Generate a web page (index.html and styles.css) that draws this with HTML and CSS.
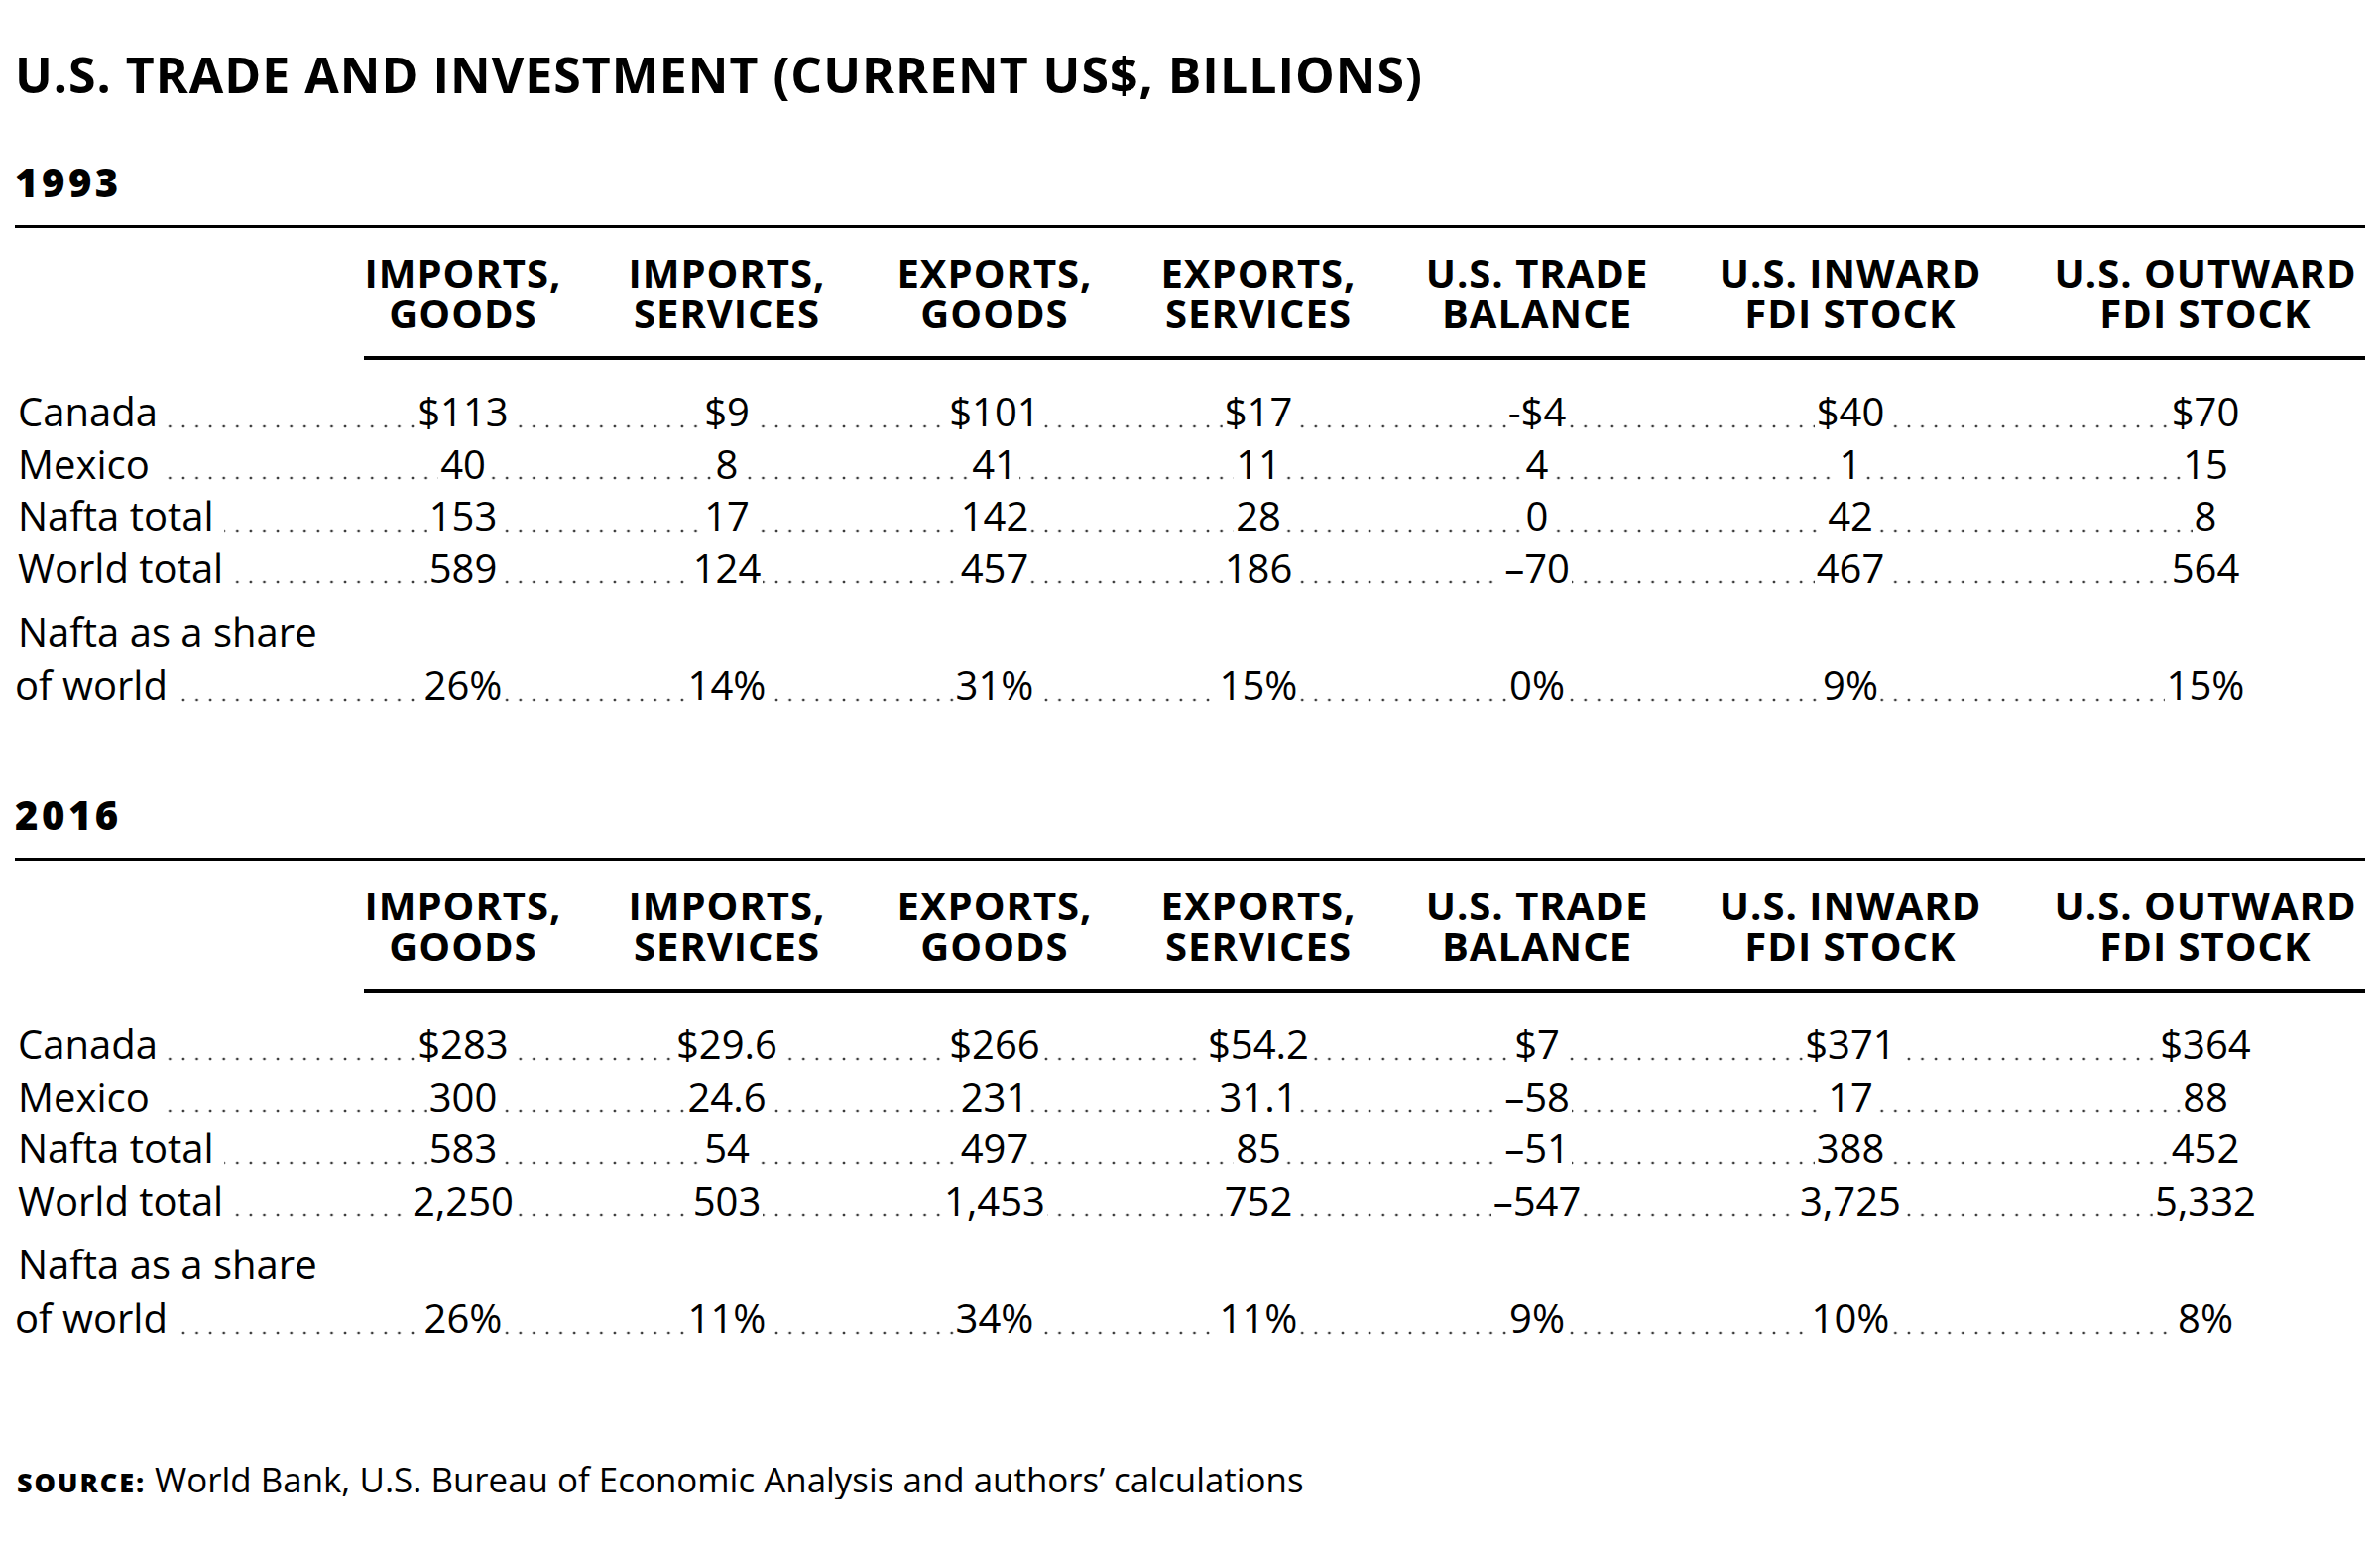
FILE: index.html
```html
<!DOCTYPE html>
<html lang="en">
<head>
<meta charset="utf-8">
<title>U.S. Trade and Investment</title>
<link rel="stylesheet" href="styles.css">
</head>
<body>
<main class="page">
  <h1 class="title">U.S. TRADE AND INVESTMENT (CURRENT US$, BILLIONS)</h1>

  <section class="block">
    <h2 class="year">1993</h2>
    <div class="grid head">
      <div class="hcell blank"></div>
      <div class="hcell">IMPORTS,<br>GOODS</div>
      <div class="hcell">IMPORTS,<br>SERVICES</div>
      <div class="hcell">EXPORTS,<br>GOODS</div>
      <div class="hcell">EXPORTS,<br>SERVICES</div>
      <div class="hcell">U.S. TRADE<br>BALANCE</div>
      <div class="hcell">U.S. INWARD<br>FDI STOCK</div>
      <div class="hcell">U.S. OUTWARD<br>FDI STOCK</div>
    </div>
    <div class="grid row first">
      <div class="label"><span>Canada</span></div>
      <div class="val"><span>$113</span></div><div class="val"><span>$9</span></div><div class="val"><span>$101</span></div><div class="val"><span>$17</span></div><div class="val"><span>-$4</span></div><div class="val"><span>$40</span></div><div class="val"><span>$70</span></div>
    </div>
    <div class="grid row">
      <div class="label"><span>Mexico</span></div>
      <div class="val"><span>40</span></div><div class="val"><span>8</span></div><div class="val"><span>41</span></div><div class="val"><span>11</span></div><div class="val"><span>4</span></div><div class="val"><span>1</span></div><div class="val"><span>15</span></div>
    </div>
    <div class="grid row">
      <div class="label"><span>Nafta total</span></div>
      <div class="val"><span>153</span></div><div class="val"><span>17</span></div><div class="val"><span>142</span></div><div class="val"><span>28</span></div><div class="val"><span>0</span></div><div class="val"><span>42</span></div><div class="val"><span>8</span></div>
    </div>
    <div class="grid row">
      <div class="label"><span>World total</span></div>
      <div class="val"><span>589</span></div><div class="val"><span>124</span></div><div class="val"><span>457</span></div><div class="val"><span>186</span></div><div class="val"><span>–70</span></div><div class="val"><span>467</span></div><div class="val"><span>564</span></div>
    </div>
    <div class="grid row share">
      <div class="label"><span>Nafta as a share<br>of world</span></div>
      <div class="val"><span>26%</span></div><div class="val"><span>14%</span></div><div class="val"><span>31%</span></div><div class="val"><span>15%</span></div><div class="val"><span>0%</span></div><div class="val"><span>9%</span></div><div class="val"><span>15%</span></div>
    </div>
  </section>

  <section class="block second">
    <h2 class="year">2016</h2>
    <div class="grid head">
      <div class="hcell blank"></div>
      <div class="hcell">IMPORTS,<br>GOODS</div>
      <div class="hcell">IMPORTS,<br>SERVICES</div>
      <div class="hcell">EXPORTS,<br>GOODS</div>
      <div class="hcell">EXPORTS,<br>SERVICES</div>
      <div class="hcell">U.S. TRADE<br>BALANCE</div>
      <div class="hcell">U.S. INWARD<br>FDI STOCK</div>
      <div class="hcell">U.S. OUTWARD<br>FDI STOCK</div>
    </div>
    <div class="grid row first">
      <div class="label"><span>Canada</span></div>
      <div class="val"><span>$283</span></div><div class="val"><span>$29.6</span></div><div class="val"><span>$266</span></div><div class="val"><span>$54.2</span></div><div class="val"><span>$7</span></div><div class="val"><span>$371</span></div><div class="val"><span>$364</span></div>
    </div>
    <div class="grid row">
      <div class="label"><span>Mexico</span></div>
      <div class="val"><span>300</span></div><div class="val"><span>24.6</span></div><div class="val"><span>231</span></div><div class="val"><span>31.1</span></div><div class="val"><span>–58</span></div><div class="val"><span>17</span></div><div class="val"><span>88</span></div>
    </div>
    <div class="grid row">
      <div class="label"><span>Nafta total</span></div>
      <div class="val"><span>583</span></div><div class="val"><span>54</span></div><div class="val"><span>497</span></div><div class="val"><span>85</span></div><div class="val"><span>–51</span></div><div class="val"><span>388</span></div><div class="val"><span>452</span></div>
    </div>
    <div class="grid row">
      <div class="label"><span>World total</span></div>
      <div class="val"><span>2,250</span></div><div class="val"><span>503</span></div><div class="val"><span>1,453</span></div><div class="val"><span>752</span></div><div class="val"><span>–547</span></div><div class="val"><span>3,725</span></div><div class="val"><span>5,332</span></div>
    </div>
    <div class="grid row share">
      <div class="label"><span>Nafta as a share<br>of world</span></div>
      <div class="val"><span>26%</span></div><div class="val"><span>11%</span></div><div class="val"><span>34%</span></div><div class="val"><span>11%</span></div><div class="val"><span>9%</span></div><div class="val"><span>10%</span></div><div class="val"><span>8%</span></div>
    </div>
  </section>

  <p class="source"><span class="source-label">Source:</span> World Bank, U.S. Bureau of Economic Analysis and authors’ calculations</p>
</main>
</body>
</html>
```

FILE: styles.css
```css
html, body {
  margin: 0;
  padding: 0;
  background: #fff;
}

body {
  font-family: "Open Sans", "Noto Sans", "DejaVu Sans", sans-serif;
  color: #000;
}

.page {
  width: 2370px;
  padding: 45px 15px 0 15px;
}

.title {
  margin: 0 0 55px 0;
  font-size: 50px;
  line-height: 60px;
  font-weight: 700;
  letter-spacing: 1px;
}

.year {
  margin: 0;
  font-size: 40px;
  line-height: 48px;
  font-weight: 800;
  letter-spacing: 3.5px;
  padding-bottom: 19px;
  border-bottom: 3px solid #000;
}

.grid {
  display: grid;
  grid-template-columns: 352px 200px 332px 208px 324px 238px 394px 322px;
}

.head {
  margin-top: 24px;
}

.hcell {
  font-size: 40px;
  line-height: 41px;
  font-weight: 700;
  letter-spacing: 1px;
  text-align: center;
  padding-bottom: 23px;
  border-bottom: 4px solid #000;
}

.hcell.blank {
  border-bottom-color: transparent;
}

.row {
  font-size: 40px;
  line-height: 52.5px;
  align-items: end;
}

.row.first {
  margin-top: 26px;
}

.row.share {
  line-height: 54px;
  margin-top: 11px;
}

.row::before {
  content: "";
  grid-column: 1 / -1;
  grid-row: 1;
  align-self: end;
  height: 4px;
  margin: 0 161px 10px 0;
  background-image: radial-gradient(circle at center, #3a3a3a 0, #3a3a3a 1.1px, rgba(0,0,0,0) 1.7px);
  background-size: 13.6px 4px;
  background-repeat: repeat-x;
}

.label, .val {
  grid-row: 1;
  position: relative;
}

.label {
  grid-column: 1;
}

.label span {
  background: #fff;
  padding: 0 10px 0 3px;
}

.val {
  text-align: center;
}

.val span {
  background: #fff;
  padding: 0 2px;
}

.grid .val:nth-child(2) { grid-column: 2; }
.grid .val:nth-child(3) { grid-column: 3; }
.grid .val:nth-child(4) { grid-column: 4; }
.grid .val:nth-child(5) { grid-column: 5; }
.grid .val:nth-child(6) { grid-column: 6; }
.grid .val:nth-child(7) { grid-column: 7; }
.grid .val:nth-child(8) { grid-column: 8; }

.block.second {
  margin-top: 80px;
}

.source {
  margin: 114px 0 0 0;
  font-size: 34.9px;
  line-height: 40px;
  padding-left: 2px;
}

.source-label {
  font-weight: 800;
  font-variant-caps: all-small-caps;
  font-size: 38px;
  letter-spacing: 2px;
}
```
